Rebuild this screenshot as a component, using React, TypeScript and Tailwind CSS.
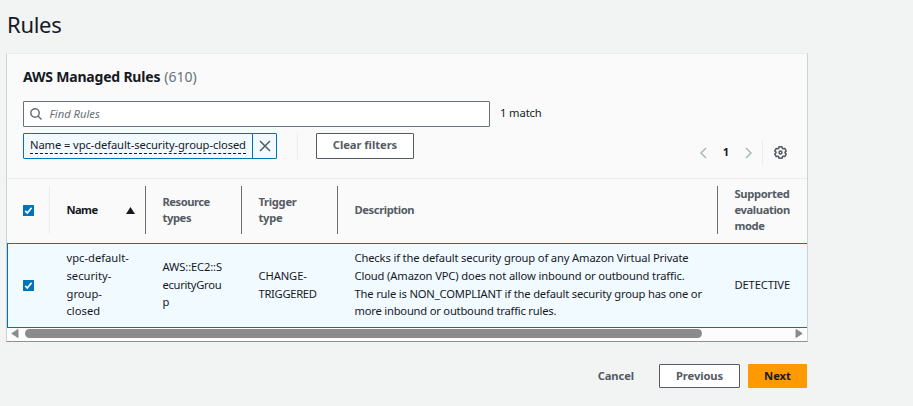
import type { ReactNode } from "react";

function Line({ children, className = "" }: { children: ReactNode; className?: string }) {
  return <span className={`block w-max whitespace-nowrap ${className}`}>{children}</span>;
}

function Checkbox() {
  return (
    <svg width="11" height="11" viewBox="0 0 11 11" className="block">
      <rect width="11" height="11" rx="0.5" fill="#0073bb" />
      <path d="M2.2 5.8 4.3 8 8.6 2.8" fill="none" stroke="#fff" strokeWidth="1.7" />
    </svg>
  );
}

function HeaderCell({ children, last = false }: { children: ReactNode; last?: boolean }) {
  return (
    <div className={`flex h-12 items-center pl-[16.5px] ${last ? "" : "border-r border-[#687078]"}`}>
      <div className="flex-1">{children}</div>
    </div>
  );
}

const columns = "grid grid-cols-[43px_96px_96px_96px_380px_89px] items-center";

export default function App() {
  return (
    <div className="h-[406px] w-[913px] overflow-hidden bg-[#f2f3f3] pl-1.5 font-['Noto_Sans','Open_Sans',sans-serif] text-[11.2px] text-[#16191f]">
      <h1 className="flex h-[53px] items-center pb-[5px] pl-px text-[22px] leading-[30px] tracking-[-0.3px]">
        <Line>Rules</Line>
      </h1>

      <section className="flex h-[289px] w-[802px] flex-col border border-t-[#eaeded] border-x-[#cdd3d3] border-b-[#879596] bg-[#fafafa]">
        <header className="h-[125px] border-b border-[#eaeded] px-4">
          <div className="flex h-[47px] items-center gap-1 pb-0.5 text-[14px] leading-5">
            <h2 className="font-bold"><Line className="tracking-[-0.2px]">AWS Managed Rules</Line></h2>
            <span className="text-[#687078]">(610)</span>
          </div>
          <div className="flex h-[26px] items-center gap-[10px]">
            <div className="flex h-[26px] w-[467px] items-center rounded-[1px] border border-[#687078] bg-white pl-1.5">
              <svg width="12" height="12" viewBox="0 0 12 12" fill="none" stroke="#687078" strokeWidth="1.5">
                <circle cx="5" cy="5" r="4.2" />
                <path d="m8 8 3.5 3.5" />
              </svg>
              <Line className="ml-[7.5px] text-[11.2px] italic text-[#687078]">Find Rules</Line>
            </div>
            <Line className="pb-px tracking-[-0.1px]">1 match</Line>
          </div>
          <div className="mt-1.5 flex h-[38px] justify-between">
            <div className="flex h-[26px]">
              <div className="flex w-[254px] rounded-[1px] border border-[#0073bb] bg-[#f1faff]">
                <div className="flex w-[228px] items-center pl-1.5">
                  <Line className="h-[15px] border-b border-dashed border-[#16191f] leading-[12px] tracking-[-0.1px]">Name = vpc-default-security-group-closed</Line>
                </div>
                <div className="flex flex-1 items-center justify-center border-l border-[#0073bb]">
                  <svg width="12" height="12" viewBox="0 0 12 12" stroke="#545b64" strokeWidth="1.5">
                    <path d="m1 1 10 10M11 1 1 11" />
                  </svg>
                </div>
              </div>
              <div className="ml-5 w-px bg-[#eaeded]" />
              <button className="ml-[18px] flex w-[98px] items-center justify-center rounded-[1px] border border-[#545b64] bg-white pb-0.5 font-bold text-[#545b64]">
                <Line className="tracking-[-0.05px]">Clear filters</Line>
              </button>
            </div>
            <div className="mt-[7px] flex h-[25px] items-center pr-1">
              <svg width="7" height="12" viewBox="0 0 7 12" fill="none" stroke="#aab7b8" strokeWidth="1.5">
                <path d="M6 1 1 6l5 5" />
              </svg>
              <span className="w-[38px] text-center font-bold">1</span>
              <svg width="7" height="12" viewBox="0 0 7 12" fill="none" stroke="#aab7b8" strokeWidth="1.5">
                <path d="m1 1 5 5-5 5" />
              </svg>
              <div className="ml-2.5 h-[25px] w-px bg-[#eaeded]" />
              <svg className="ml-[11px]" width="13" height="13" viewBox="0 0 16 16" fill="none" stroke="#545b64" strokeWidth="1.9" strokeLinejoin="round">
                <path d="M6.2 1h3.6l.6 2 .9.5 2-.5L15 6.1 13.6 7.5v1L15 9.9 13.3 13l-2-.5-.9.5-.6 2H6.2l-.6-2-.9-.5-2 .5L1 9.9l1.4-1.4v-1L1 6.1 2.7 3l2 .5.9-.5z" />
                <circle cx="8" cy="8" r="1.8" />
              </svg>
            </div>
          </div>
        </header>

        <div className={`${columns} h-16 shrink-0 pb-0.5 font-bold leading-4 text-[#545b64]`}>
          <div className="flex h-12 items-center border-r border-[#eaeded] pl-4"><Checkbox /></div>
          <HeaderCell>
            <div className="flex items-center justify-between pr-2.5 text-[#16191f]">
              <Line className="tracking-[-0.6px]">Name</Line>
              <svg width="9" height="7" viewBox="0 0 9 7"><path d="M4.5 0 9 7H0z" fill="#16191f" /></svg>
            </div>
          </HeaderCell>
          <HeaderCell><Line className="tracking-[-0.5px]">Resource</Line><Line className="tracking-[-0.4px]">types</Line></HeaderCell>
          <HeaderCell><Line className="tracking-[-0.3px]">Trigger</Line><Line className="tracking-[-0.3px]">type</Line></HeaderCell>
          <HeaderCell><Line className="tracking-[-0.4px]">Description</Line></HeaderCell>
          <HeaderCell last><Line className="tracking-[-0.35px]">Supported</Line><Line className="tracking-[-0.4px]">evaluation</Line><Line className="tracking-[-0.4px]">mode</Line></HeaderCell>
        </div>

        <div className={`${columns} h-[85px] shrink-0 border border-r-0 border-[#0073bb] bg-[#f1faff] leading-[17.6px]`}>
          <div className="pl-[15px]"><Checkbox /></div>
          <div className="pb-0.5 pl-[15.5px]"><Line>vpc-default-</Line><Line>security-</Line><Line>group-</Line><Line>closed</Line></div>
          <div className="pb-0.5 pl-[15.5px]"><Line className="tracking-[-0.15px]">AWS::EC2::S</Line><Line className="tracking-[-0.3px]">ecurityGrou</Line><Line>p</Line></div>
          <div className="pb-0.5 pl-[15.5px]"><Line className="tracking-[-0.1px]">CHANGE-</Line><Line className="tracking-[-0.3px]">TRIGGERED</Line></div>
          <div className="pb-0.5 pl-[15.5px]">
            <Line className="tracking-[-0.145px]">Checks if the default security group of any Amazon Virtual Private</Line>
            <Line className="tracking-[-0.135px]">Cloud (Amazon VPC) does not allow inbound or outbound traffic.</Line>
            <Line className="tracking-[-0.18px]">The rule is NON_COMPLIANT if the default security group has one or</Line>
            <Line className="tracking-[-0.21px]">more inbound or outbound traffic rules.</Line>
          </div>
          <div className="pb-0.5 pl-[15.5px]"><Line className="tracking-[-0.15px]">DETECTIVE</Line></div>
        </div>

        <div className="flex flex-1 items-center justify-between bg-[#fcfcfc] px-1 pb-[3px]">
          <svg width="8" height="9" viewBox="0 0 8 9"><path d="M7 .5v8L.8 4.5z" fill="#8b8b8b" stroke="#8b8b8b" strokeLinejoin="round" /></svg>
          <div className="ml-1.5 mr-auto h-[9px] w-[677px] rounded-full bg-[#8b8b8b]" />
          <svg width="8" height="9" viewBox="0 0 8 9"><path d="M1 .5v8l6.2-4z" fill="#8b8b8b" stroke="#8b8b8b" strokeLinejoin="round" /></svg>
        </div>
      </section>

      <footer className="mt-[22px] flex h-6 w-[801px] items-stretch justify-end font-bold text-[#545b64]">
        <button className="mr-[25px] flex items-center"><Line className="tracking-[-0.1px]">Cancel</Line></button>
        <button className="mr-2 flex w-[81px] items-center justify-center rounded-[1px] border border-[#545b64] bg-white"><Line className="tracking-[-0.1px]">Previous</Line></button>
        <button className="flex w-[59px] items-center justify-center rounded-[1px] bg-[#ff9900] text-[#16191f]"><Line>Next</Line></button>
      </footer>
    </div>
  );
}
